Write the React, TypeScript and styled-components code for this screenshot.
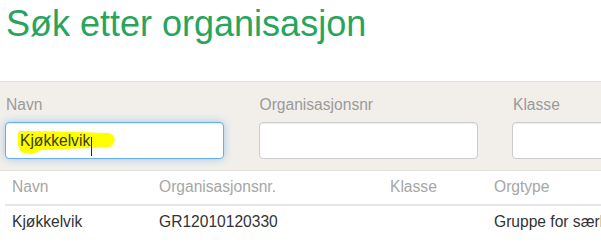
import React from "react";
import styled, { createGlobalStyle } from "styled-components";

const Global = createGlobalStyle`
  html, body { margin: 0; padding: 0; background: #fff; }
  body { font-family: "Liberation Sans", Arial, sans-serif; overflow: hidden; }
`;

const Page = styled.div`
  width: 601px;
  height: 245px;
  overflow: hidden;
`;

const Title = styled.h1`
  margin: 2px 0 0 0;
  padding-left: 6px;
  height: 79px;
  font-size: 36px;
  line-height: 44px;
  font-weight: normal;
  color: #27a55c;
  white-space: nowrap;
`;

const Panel = styled.div`
  background: #f2efeb;
  border-top: 1px solid #e2deda;
  border-bottom: 1px solid #e2deda;
  padding: 13px 0 11px 5px;
  display: grid;
  grid-template-columns: 219px 219px 219px;
  column-gap: 34.5px;
  width: 900px;
`;

const Field = styled.div`
  display: flex;
  flex-direction: column;
  gap: 7px;
`;

const Label = styled.label`
  font-size: 15.6px;
  line-height: 20px;
  color: #9a9a9a;
  padding-left: 1px;
`;

const Input = styled.div<{ $focused?: boolean }>`
  position: relative;
  box-sizing: border-box;
  height: 37px;
  background: #fff;
  border: 1px solid ${(p) => (p.$focused ? "#66afe9" : "#cccccc")};
  border-radius: 4px;
  box-shadow: ${(p) =>
    p.$focused
      ? "inset 0 1px 1px rgba(0,0,0,.075), 0 0 8px rgba(102,175,233,.6)"
      : "inset 0 1px 1px rgba(0,0,0,.075)"};
  display: flex;
  align-items: center;
  padding-left: 14px;
  font-size: 15.6px;
  color: #333;
`;

const Marker = styled.svg`
  position: absolute;
  left: 11px;
  top: 7px;
  width: 100px;
  height: 26px;
`;

const Value = styled.span`
  position: relative;
  color: #3a3a10;
`;

const Caret = styled.span`
  position: absolute;
  left: 85px;
  top: 14px;
  width: 1px;
  height: 19px;
  background: #222;
`;

const Table = styled.div`
  margin-left: 5px;
  width: 700px;
`;

const Row = styled.div<{ $head?: boolean }>`
  display: grid;
  grid-template-columns: 147px 231px 104px 1fr;
  border-bottom: ${(p) => (p.$head ? "2px solid #e6e6e6" : "none")};
`;

const Cell = styled.div<{ $head?: boolean }>`
  padding: 5px 6px 6px 7px;
  font-size: 15.6px;
  line-height: 22px;
  color: ${(p) => (p.$head ? "#a6a6a6" : "#333")};
  white-space: nowrap;
`;

export default function App() {
  return (
    <Page>
      <Global />
      <Title>Søk etter organisasjon</Title>
      <Panel>
        <Field>
          <Label>Navn</Label>
          <Input $focused>
            <Marker viewBox="0 0 100 26">
              <path
                d="M2 1 C30 1 65 2 91 3 C97 4 99 8 97 12 C96 16 93 17 90 17 C70 18 45 19 25 20 C20 21 17 25 12 24 C6 23 3 22 2 18 C0 12 0 5 2 1 Z"
                fill="#ffff00"
              />
            </Marker>
            <Value>Kjøkkelvik</Value>
            <Caret />
          </Input>
        </Field>
        <Field>
          <Label>Organisasjonsnr</Label>
          <Input />
        </Field>
        <Field>
          <Label>Klasse</Label>
          <Input />
        </Field>
      </Panel>
      <Table>
        <Row $head>
          <Cell $head>Navn</Cell>
          <Cell $head>Organisasjonsnr.</Cell>
          <Cell $head>Klasse</Cell>
          <Cell $head>Orgtype</Cell>
        </Row>
        <Row>
          <Cell>Kjøkkelvik</Cell>
          <Cell>GR12010120330</Cell>
          <Cell></Cell>
          <Cell>Gruppe for særlige formål</Cell>
        </Row>
      </Table>
    </Page>
  );
}
